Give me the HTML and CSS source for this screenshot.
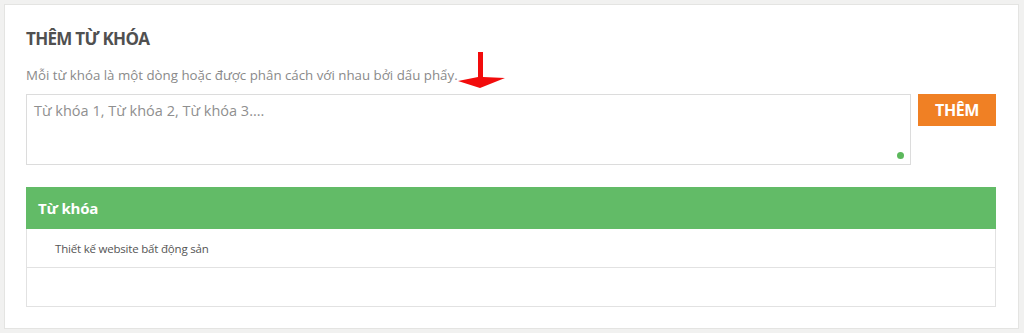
FILE: index.html
```html
<!DOCTYPE html>
<html lang="vi">
<head>
<meta charset="utf-8">
<title>Thêm từ khóa</title>
<link rel="stylesheet" href="styles.css">
</head>
<body>
<div class="card">
  <h2 class="title">THÊM TỪ KHÓA</h2>
  <div class="hint-row">
    <p class="hint">Mỗi từ khóa là một dòng hoặc được phân cách với nhau bởi dấu phẩy.</p>
    <svg class="arrow" width="48" height="38" viewBox="0 0 48 38" aria-hidden="true">
      <path d="M20 0 H25 V25 L47 26 L22 36 L0 29 L20 25 Z" fill="#f20c0c"/>
    </svg>
  </div>
  <div class="input-row">
    <div class="field">
      <textarea class="keywords" placeholder="Từ khóa 1, Từ khóa 2, Từ khóa 3...."></textarea>
      <span class="dot"></span>
    </div>
    <button class="add-btn" type="button">THÊM</button>
  </div>
  <div class="table">
    <div class="thead">Từ khóa</div>
    <div class="row">Thiết kế website bất động sản</div>
    <div class="row"></div>
  </div>
</div>
</body>
</html>
```

FILE: styles.css
```css
* { box-sizing: border-box; }
html, body { margin: 0; padding: 0; }
body {
  background: #f1f1f0;
  font-family: "Open Sans", "Noto Sans", sans-serif;
  width: 1024px;
  height: 333px;
  overflow: hidden;
}
.card {
  margin: 4px 5px 4px 4px;
  height: 325px;
  background: #fff;
  border: 1px solid #e4e4e2;
  padding: 22px 22px 0 21px;
}
.title {
  margin: 0;
  font-size: 17px;
  font-weight: 700;
  color: #505050;
  letter-spacing: -0.7px;
  line-height: 24px;
}
.hint-row {
  display: flex;
  align-items: flex-end;
  height: 39px;
}
.hint {
  margin: 0 0 6px 0;
  font-size: 13.3px;
  color: #8a8a8a;
  letter-spacing: 0;
  line-height: 18px;
}
.arrow {
  display: block;
  margin-left: 0;
  flex: none;
}
.input-row {
  display: flex;
  align-items: flex-start;
  gap: 7px;
  margin-top: 4px;
}
.field {
  position: relative;
  flex: 1;
  height: 71px;
}
.keywords {
  display: block;
  width: 100%;
  height: 100%;
  resize: none;
  border: 1px solid #dcdcdc;
  padding: 6px 7px;
  font-family: "Open Sans", "Noto Sans", sans-serif;
  font-size: 14.5px;
  line-height: 20px;
  color: #555;
  outline: none;
}
.keywords::placeholder { color: #8f8f8f; }
.dot {
  position: absolute;
  right: 7px;
  bottom: 6px;
  width: 7px;
  height: 7px;
  border-radius: 50%;
  background: #5cb85c;
}
.add-btn {
  width: 78px;
  height: 32px;
  border: 0;
  background: #f08024;
  color: #fff;
  font-family: "Open Sans", "Noto Sans", sans-serif;
  font-weight: 700;
  font-size: 16px;
  letter-spacing: -0.4px;
  padding: 0;
}
.table {
  margin-top: 22px;
  border: 1px solid #e2e2e2;
  border-top: 0;
}
.thead {
  height: 42px;
  background: #62bb67;
  color: #fff;
  font-weight: 700;
  font-size: 15px;
  padding: 0 12px;
  display: flex;
  align-items: center;
  margin: 0 -1px;
  letter-spacing: -0.2px;
}
.row {
  height: 39px;
  border-bottom: 1px solid #e2e2e2;
  font-size: 11.5px;
  color: #555;
  padding: 0 0 0 28px;
  display: flex;
  align-items: center;
  letter-spacing: -0.2px;
}
.row:last-child { height: 38px; border-bottom: 0; }
```
